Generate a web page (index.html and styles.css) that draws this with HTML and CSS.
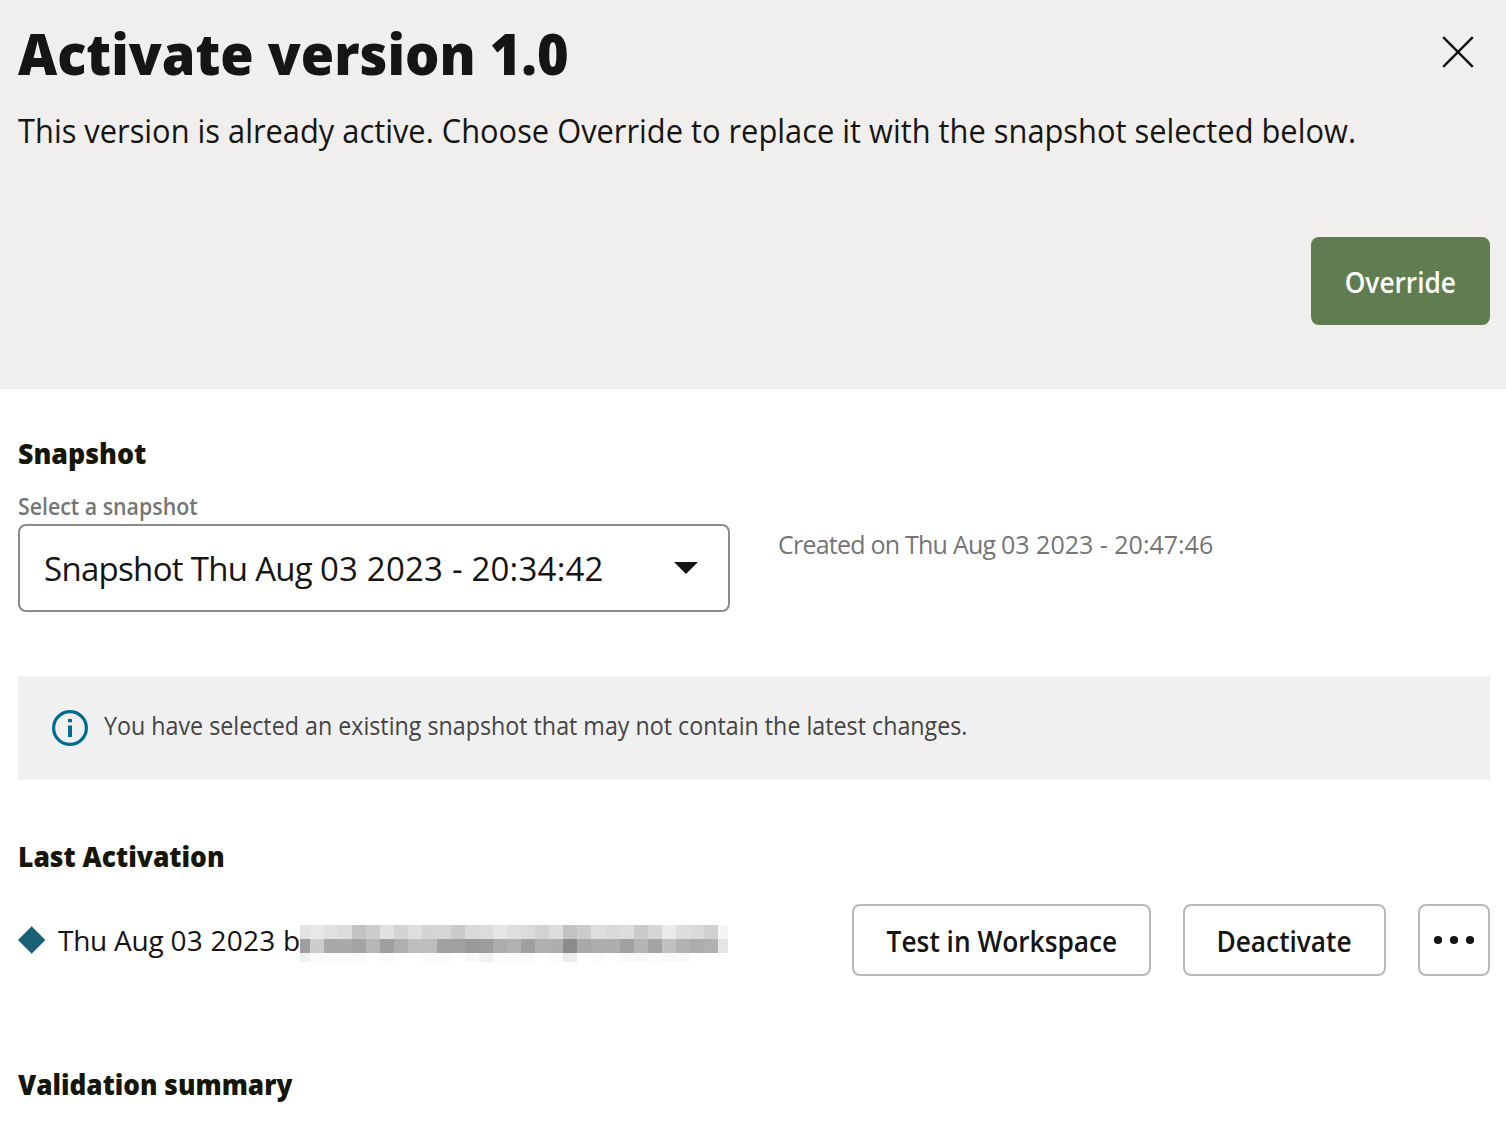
FILE: index.html
```html
<!DOCTYPE html>
<html lang="en">
<head>
<meta charset="utf-8">
<title>Activate version 1.0</title>
<link rel="stylesheet" href="styles.css">
</head>
<body>
<header class="header">
  <div class="title-row">
    <h1 class="title">Activate version 1.0</h1>
    <button class="close" aria-label="Close">
      <svg width="32" height="32" viewBox="0 0 32 32"><path d="M1.2 1.2l29.6 29.6M30.8 1.2L1.2 30.8" fill="none" stroke="#161513" stroke-width="2.5"/></svg>
    </button>
  </div>
  <p class="description">This version is already active. Choose Override to replace it with the snapshot selected below.</p>
  <div class="header-actions"><button class="primary"><span class="button-text">Override</span></button></div>
</header>
<main class="content">
  <h2 class="heading snapshot-heading">Snapshot</h2>
  <div class="snapshot-row">
    <div class="field">
      <label class="label">Select a snapshot</label>
      <div class="select">
        <span class="select-value"><span class="words">Snapshot Thu Aug </span>03 2023 - 20:34:42</span>
        <svg class="caret" width="24" height="12" viewBox="0 0 24 12"><path d="M0 0h24L12 12z" fill="#161513"/></svg>
      </div>
    </div>
    <p class="created"><span class="words">Created on Thu Aug </span>03 2023 - 20:47:46</p>
  </div>
  <div class="notice">
    <svg class="info" width="36" height="36" viewBox="0 0 36 36"><circle cx="18" cy="18" r="16.4" fill="none" stroke="#006b8f" stroke-width="3.2"/><path d="M16 9h4v3.2h-4zM16 15.5h4V27h-4z" fill="#006b8f"/></svg>
    <span class="notice-text">You have selected an existing snapshot that may not contain the latest changes.</span>
  </div>
  <h2 class="heading activation-heading">Last Activation</h2>
  <div class="activation-row">
    <svg class="diamond" width="28" height="28" viewBox="0 0 28 28"><path d="M13.7 .3l13.7 13.7-13.7 13.7L0 14z" fill="#1a6076"/></svg>
    <div class="activation">
      <span class="activation-text"><span class="words">Thu Aug </span>03 2023 by</span>
      <svg class="redacted" width="428" height="37" viewBox="0 0 428 37" shape-rendering="crispEdges">
        <path d="M0 0h428v37H0z" fill="#fff"/>
        <g>
          <path fill="#e2e2e2" d="M0 0h10v14H0z"/><path fill="#e8e8e8" d="M10 0h14v14H10z"/><path fill="#e1e1e1" d="M24 0h14v14H24z"/><path fill="#dcdcdc" d="M38 0h14v14H38z"/><path fill="#c3c3c3" d="M52 0h14v14H52z"/><path fill="#cdcdcd" d="M66 0h14v14H66z"/><path fill="#e1e1e1" d="M80 0h14v14H80z"/><path fill="#d4d4d4" d="M94 0h14v14H94z"/><path fill="#dfdfdf" d="M108 0h14v14h-14z"/><path fill="#d4d4d4" d="M122 0h15v14h-15z"/><path fill="#d6d6d6" d="M137 0h14v14h-14z"/><path fill="#cbcac8" d="M151 0h14v14h-14z"/><path fill="#dadada" d="M165 0h14v14h-14z"/><path fill="#dcdcdc" d="M179 0h14v14h-14z"/><path fill="#e6e6e6" d="M193 0h14v14h-14z"/><path fill="#dfdfdf" d="M207 0h14v14h-14z"/><path fill="#dbdbdb" d="M221 0h14v14h-14z"/><path fill="#d3d3d3" d="M235 0h14v14h-14z"/><path fill="#dddddd" d="M249 0h14v14h-14z"/><path fill="#c3c2c0" d="M263 0h14v14h-14z"/><path fill="#cdcccb" d="M277 0h14v14h-14z"/><path fill="#dfdfdf" d="M291 0h14v14h-14z"/><path fill="#dadada" d="M305 0h15v14h-15z"/><path fill="#dddddd" d="M320 0h14v14h-14z"/><path fill="#cacaca" d="M334 0h14v14h-14z"/><path fill="#d7d6d4" d="M348 0h14v14h-14z"/><path fill="#eaeaea" d="M362 0h14v14h-14z"/><path fill="#dddddd" d="M376 0h14v14h-14z"/><path fill="#dadada" d="M390 0h14v14h-14z"/><path fill="#d0d0d0" d="M404 0h14v14h-14z"/><path fill="#f5f5f5" d="M418 0h10v14h-10z"/>
        </g>
        <g>
          <path fill="#9f9e9c" d="M0 14h10v14H0z"/><path fill="#cdcdcb" d="M10 14h14v14H10z"/><path fill="#a9a9a8" d="M24 14h28v14H24z"/><path fill="#a5a3a1" d="M52 14h14v14H52z"/><path fill="#b6b6b4" d="M66 14h14v14H66z"/><path fill="#9f9f9e" d="M80 14h14v14H80z"/><path fill="#afafad" d="M94 14h14v14H94z"/><path fill="#bdbdbc" d="M108 14h29v14h-29z"/><path fill="#a2a19f" d="M137 14h14v14h-14z"/><path fill="#a3a19e" d="M151 14h14v14h-14z"/><path fill="#999999" d="M165 14h14v14h-14z"/><path fill="#9c9c9b" d="M179 14h14v14h-14z"/><path fill="#acacac" d="M193 14h14v14h-14z"/><path fill="#b2b2b1" d="M207 14h14v14h-14z"/><path fill="#a0a09e" d="M221 14h14v14h-14z"/><path fill="#b0b0b0" d="M235 14h14v14h-14z"/><path fill="#aeaeae" d="M249 14h14v14h-14z"/><path fill="#8b8b89" d="M263 14h14v14h-14z"/><path fill="#a9a9a8" d="M277 14h14v14h-14z"/><path fill="#adadac" d="M291 14h29v14h-29z"/><path fill="#a3a19f" d="M320 14h14v14h-14z"/><path fill="#b5b5b5" d="M334 14h14v14h-14z"/><path fill="#a3a3a1" d="M348 14h14v14h-14z"/><path fill="#c1c1bf" d="M362 14h14v14h-14z"/><path fill="#b2b2b2" d="M376 14h14v14h-14z"/><path fill="#acacaa" d="M390 14h14v14h-14z"/><path fill="#b1b1b1" d="M404 14h14v14h-14z"/><path fill="#e6e6e6" d="M418 14h10v14h-10z"/>
        </g>
        <g>
          <path fill="#f0f0f0" d="M0 28h10v9H0z"/><path fill="#fbfbfb" d="M10 28h56v9H10zM80 28h14v9H80zM122 28h29v9h-29zM193 28h42v9h-42zM249 28h14v9h-14zM291 28h14v9h-14z"/><path fill="#f8f8f8" d="M165 28h14v9h-14z"/><path fill="#f2f2f2" d="M179 28h14v9h-14z"/><path fill="#ececec" d="M263 28h14v9h-14z"/><path fill="#f9f9f9" d="M320 28h28v9h-28z"/><path fill="#fcfcfc" d="M348 28h14v9h-14z"/><path fill="#f9f9f7" d="M362 28h28v9h-28z"/>
        </g>
      </svg>
    </div>
    <div class="actions">
      <button class="outlined test"><span class="button-text">Test in Workspace</span></button>
      <button class="outlined deactivate"><span class="button-text">Deactivate</span></button>
      <button class="outlined more" aria-label="More actions"><svg width="42" height="10" viewBox="0 0 42 10"><g fill="#161513"><circle cx="5" cy="5" r="4.1"/><circle cx="21" cy="5" r="4.1"/><circle cx="37" cy="5" r="4.1"/></g></svg></button>
    </div>
  </div>
  <h2 class="heading validation-heading">Validation summary</h2>
</main>
</body>
</html>
```
FILE: styles.css
```css
* { box-sizing: border-box; }
body { margin: 0; height: 1136px; overflow: hidden; background: #fff; color: #161513; font-family: "Open Sans", "Noto Sans", sans-serif; white-space: nowrap; }
h1, h2, p { margin: 0; }
button { font: inherit; color: inherit; padding: 0; border: 0; background: none; display: flex; align-items: center; justify-content: center; }
svg { display: block; flex: none; }

/* Slightly condensed lettering */
.title, .description, .heading, .label, .notice-text { transform-origin: left center; }
.title { transform: scaleX(.948); }
.description { transform: scaleX(.934); }
.label { transform: scaleX(.927); }
.notice-text { transform: scaleX(.93); }
.button-text { transform: scaleX(.938); }
.snapshot-heading { transform: scaleX(.955); }
.activation-heading { transform: scaleX(.944); }
.validation-heading { transform: scaleX(.936); }

.header { height: 389px; padding: 16px 16px 0 18px; background: #f0efed; }
.title-row { display: flex; justify-content: space-between; height: 76px; }
.title { font-size: 57px; line-height: 74px; font-weight: 800; }
.close { width: 32px; height: 32px; margin: 20px 16px 0 0; }
.description { width: max-content; margin-top: 16px; font-size: 33px; line-height: 46px; }
.header-actions { display: flex; justify-content: flex-end; margin-top: 83px; }
.primary { width: 179px; height: 88px; padding-top: 1px; border-radius: 8px; background: #5f7d4f; color: #fff; font-size: 28px; font-weight: 600; }
.content { padding: 44px 16px 0 18px; }
.heading { width: max-content; font-size: 28px; line-height: 40px; font-weight: 800; color: #17160a; }
.snapshot-row { display: flex; margin-top: 17px; }
.field { width: 712px; }
.label { display: block; width: max-content; height: 34px; font-size: 23px; line-height: 32px; font-weight: 600; color: #757575; }
.select { display: flex; align-items: center; justify-content: space-between; height: 88px; padding: 0 30px 0 24px; border: 2px solid #8b8b8b; border-radius: 8px; font-size: 33px; letter-spacing: .2px; }
.select-value { padding-top: 1px; }
.select .words { letter-spacing: -.7px; }
.created { margin: 37px 0 0 48px; font-size: 25px; line-height: 34px; color: #757575; }
.created .words { letter-spacing: -.77px; }
.notice { display: flex; height: 104px; margin-top: 64px; padding: 34px 34px 0; background: #f0f0f0; }
.notice-text { margin-left: 16px; font-size: 25px; line-height: 30px; color: #444; }
.activation-heading { margin-top: 56px; }
.activation-row { display: flex; align-items: center; height: 72px; margin-top: 28px; }
.activation { display: flex; align-items: center; width: 670px; margin-left: 12px; font-size: 28px; letter-spacing: .25px; }
.activation-text { width: 242px; }
.activation .words { letter-spacing: -.25px; }
.redacted { margin-top: 7px; }
.actions { display: flex; gap: 32px; margin-left: auto; }
.outlined { height: 72px; border: 2px solid #b8b8b8; border-radius: 8px; font-size: 28px; font-weight: 600; }
.outlined .button-text { margin-top: 2px; }
.test { width: 299px; }
.deactivate { width: 203px; }
.more { width: 72px; }
.validation-heading { margin-top: 88px; }
```
